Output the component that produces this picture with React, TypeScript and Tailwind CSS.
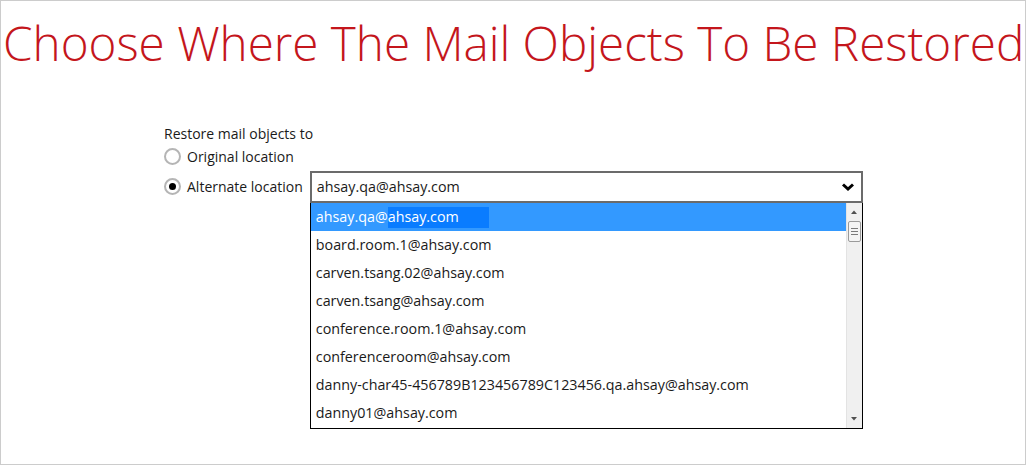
import { useState } from 'react';

const accounts = [
  'ahsay.qa@ahsay.com',
  'board.room.1@ahsay.com',
  'carven.tsang.02@ahsay.com',
  'carven.tsang@ahsay.com',
  'conference.room.1@ahsay.com',
  'conferenceroom@ahsay.com',
  'danny-char45-456789B123456789C123456.qa.ahsay@ahsay.com',
  'danny01@ahsay.com',
];

function Radio({ checked }: { checked: boolean }) {
  return (
    <span className="w-[17px] h-[17px] rounded-full border-2 border-[#b5b5b5] bg-white flex items-center justify-center shrink-0">
      {checked && <span className="w-[7px] h-[7px] rounded-full bg-black" />}
    </span>
  );
}

export default function App() {
  const [mode, setMode] = useState<'original' | 'alternate'>('alternate');
  const [selected] = useState(accounts[0]);

  return (
    <div className="w-[1026px] h-[465px] bg-white border border-[#cccccc] overflow-hidden font-['Open_Sans',sans-serif] text-[#1a1a1a]">
      <h1 className="pl-[2px] pt-[13px] text-[47.6px] leading-[58px] font-light text-[#c4161c] whitespace-nowrap">
        Choose Where The Mail Objects To Be Restored
      </h1>

      <div className="ml-[163px] mt-[52px] text-[14px]">
        <div className="leading-[20px]">Restore mail objects to</div>
        <button onClick={() => setMode('original')} className="flex items-center gap-[6px] h-[24px]">
          <Radio checked={mode === 'original'} />
          <span>Original location</span>
        </button>
        <div className="flex items-start mt-[3px]">
          <button onClick={() => setMode('alternate')} className="flex items-center gap-[6px] h-[31px] mr-[7px]">
            <Radio checked={mode === 'alternate'} />
            <span>Alternate location</span>
          </button>
          <div className="w-[553px]">
            <div className="h-[32px] border-2 border-[#6b6b6b] bg-white flex items-center justify-between pl-[5px] pr-[6px] text-[14.3px]">
              <span>{selected}</span>
              <svg width="14" height="10" viewBox="0 0 14 10">
                <path d="M2 2.5 L7 7 L12 2.5" fill="none" stroke="#000" strokeWidth="3" />
              </svg>
            </div>
            <div className="h-[226px] border border-black border-t-0 flex bg-white">
              <ul className="flex-1 text-[14.3px]">
                {accounts.map((a, i) => (
                  <li
                    key={a}
                    className={`h-[28px] flex items-center pl-[5px] whitespace-nowrap ${i === 0 ? 'bg-[#3399ff] text-white' : ''}`}
                  >
                    {i === 0 ? (
                      <>
                        <span>ahsay.qa@</span>
                        <span className="bg-[#0a7cff] h-[21px] flex items-center pr-[30px]">ahsay.com</span>
                      </>
                    ) : (
                      a
                    )}
                  </li>
                ))}
              </ul>
              <div className="w-[16px] bg-[#f0f0f0] border-l border-[#e3e3e3] flex flex-col items-center">
                <svg width="16" height="16" viewBox="0 0 16 16" className="mt-[1px]">
                  <path d="M5 10 L8 6.5 L11 10 Z" fill="#505050" />
                </svg>
                <div className="w-[13px] h-[21px] mt-[1px] border border-[#9a9a9a] rounded-[2px] bg-[#f4f4f4] flex flex-col items-center justify-center gap-[2px]">
                  <span className="w-[7px] h-px bg-[#7a7a7a]" />
                  <span className="w-[7px] h-px bg-[#7a7a7a]" />
                  <span className="w-[7px] h-px bg-[#7a7a7a]" />
                </div>
                <div className="flex-1" />
                <svg width="16" height="16" viewBox="0 0 16 16" className="mb-[1px]">
                  <path d="M5 6 L8 9.5 L11 6 Z" fill="#505050" />
                </svg>
              </div>
            </div>
          </div>
        </div>
      </div>
    </div>
  );
}
